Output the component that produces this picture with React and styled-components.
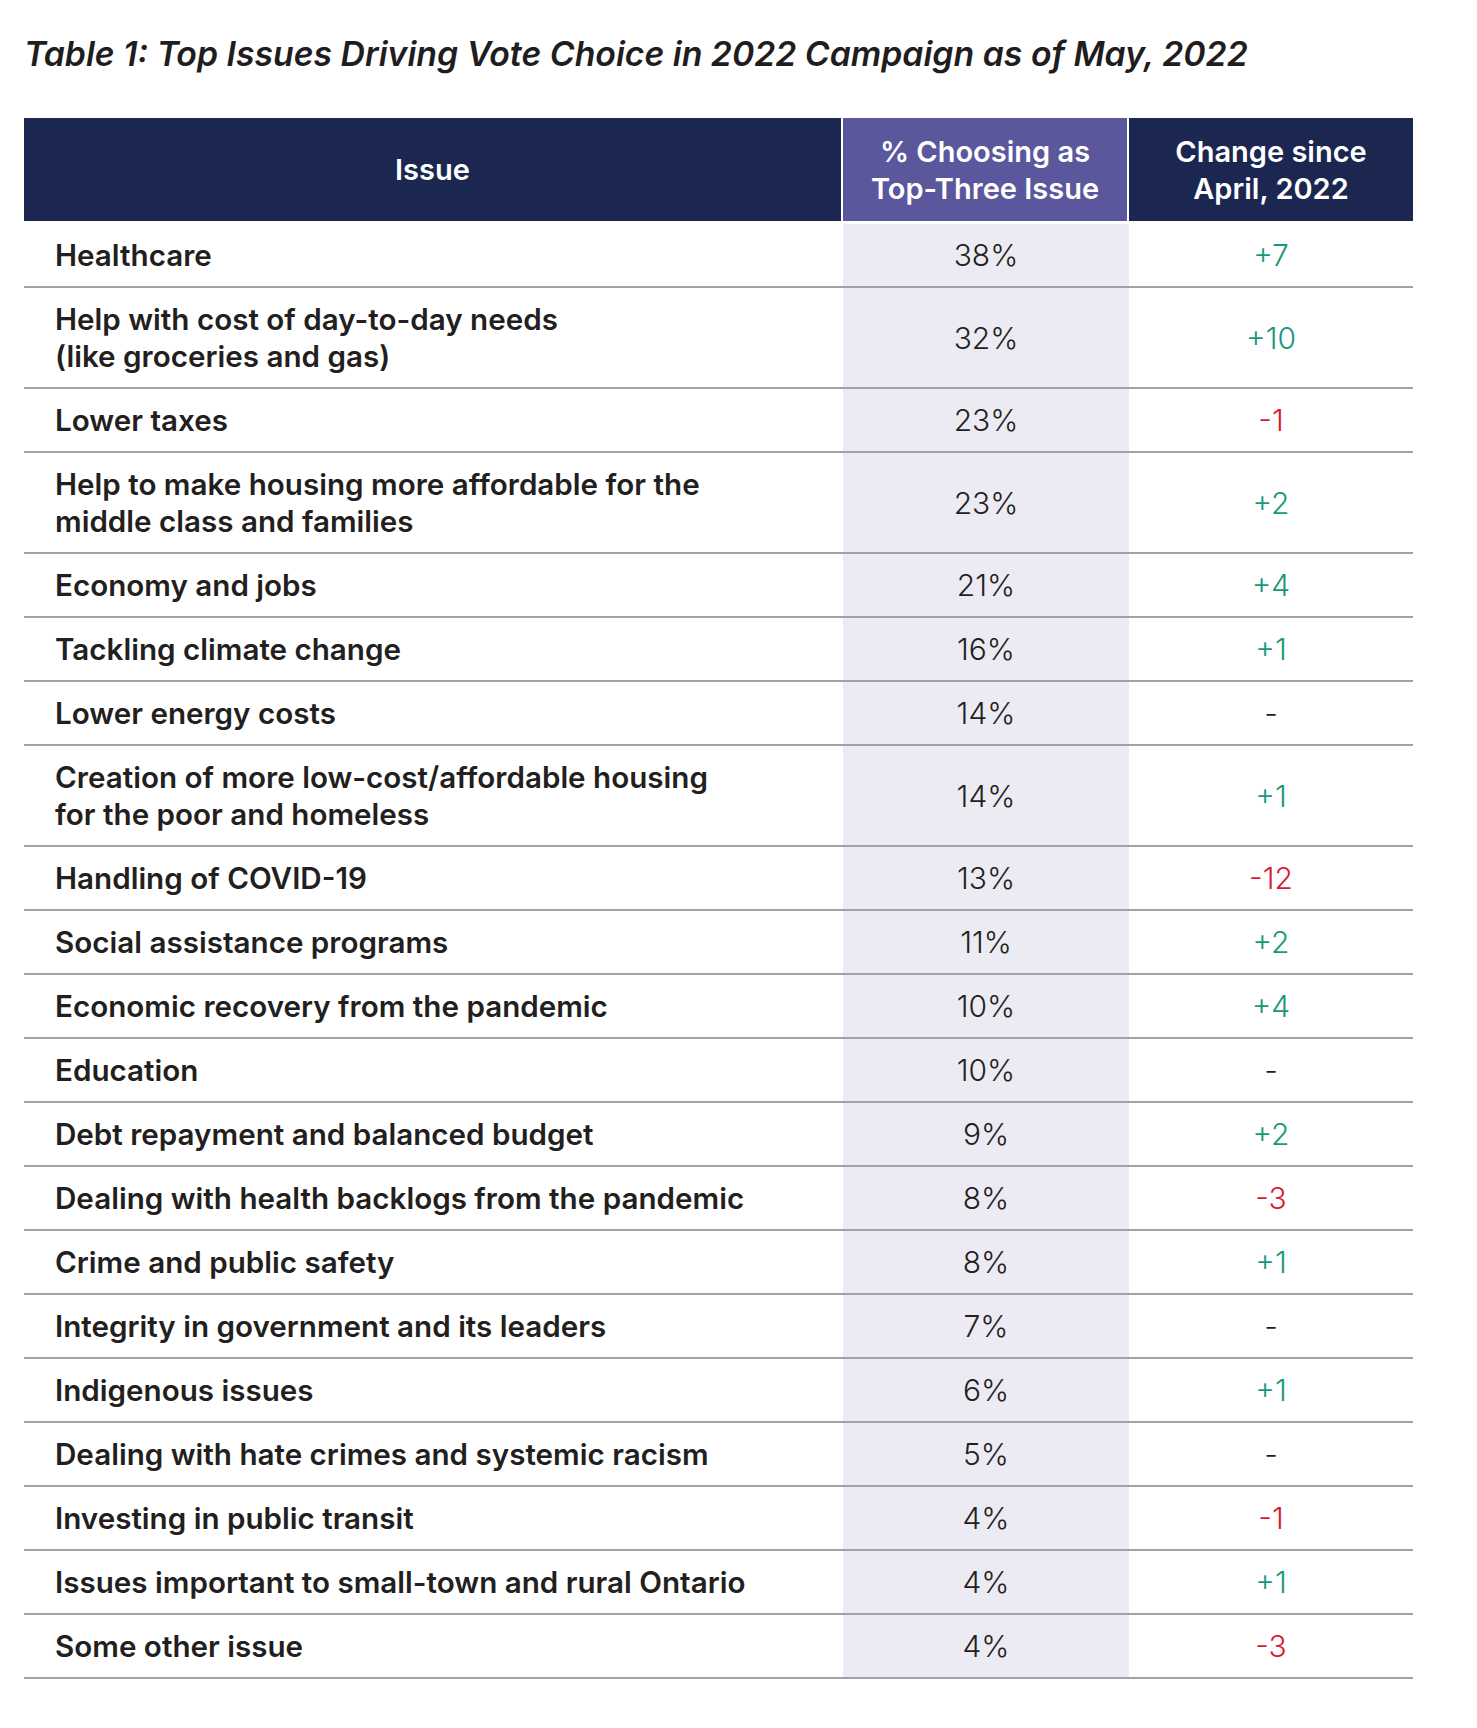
import React from 'react';
import styled, { createGlobalStyle } from 'styled-components';

const GlobalStyle = createGlobalStyle`
  html, body {
    margin: 0;
    padding: 0;
    background: #fff;
  }
  body {
    font-family: "Inter", "Noto Sans", "Liberation Sans", sans-serif;
    color: #231f20;
  }
`;

const Page = styled.div`
  width: 1477px;
  padding: 34px 0 50px 24px;
  box-sizing: border-box;
`;

const Title = styled.h1`
  margin: 0 0 44px;
  font-size: 33.8px;
  line-height: 40px;
  font-weight: 600;
  font-style: italic;
  color: #1f1d1e;
`;

const Table = styled.div`
  width: 1389px;
`;

const HeaderRow = styled.div`
  display: grid;
  grid-template-columns: 817px 284px 284px;
  column-gap: 2px;
  height: 103px;
  margin-bottom: 3px;
`;

const HeadCell = styled.div`
  display: flex;
  align-items: center;
  justify-content: center;
  text-align: center;
  background: ${p => (p.$accent ? '#5b579d' : '#1b2751')};
  color: #fff;
  font-size: 29px;
  line-height: 37px;
  font-weight: 600;
`;

const Row = styled.div`
  display: grid;
  grid-template-columns: 819px 286px 284px;
  border-bottom: 2px solid #a2a2a4;
`;

const Cell = styled.div`
  display: flex;
  align-items: center;
  padding: 13px 0 12px;
  font-size: 30px;
  line-height: 37px;
`;

const IssueCell = styled(Cell)`
  padding-left: 31px;
  font-size: 29.6px;
  font-weight: 600;
  color: #231f20;
`;

const ShareCell = styled(Cell)`
  justify-content: center;
  background: #ecebf4;
  font-weight: 300;
  color: #231f20;
`;

const ChangeCell = styled(Cell)`
  justify-content: center;
  font-weight: 300;
  color: ${p => (p.$dir === 'up' ? '#17987a' : p.$dir === 'down' ? '#d71a34' : '#231f20')};
`;

const rows = [
  [['Healthcare'], '38%', '+7'],
  [['Help with cost of day-to-day needs', '(like groceries and gas)'], '32%', '+10'],
  [['Lower taxes'], '23%', '-1'],
  [['Help to make housing more affordable for the', 'middle class and families'], '23%', '+2'],
  [['Economy and jobs'], '21%', '+4'],
  [['Tackling climate change'], '16%', '+1'],
  [['Lower energy costs'], '14%', '-'],
  [['Creation of more low-cost/affordable housing', 'for the poor and homeless'], '14%', '+1'],
  [['Handling of COVID-19'], '13%', '-12'],
  [['Social assistance programs'], '11%', '+2'],
  [['Economic recovery from the pandemic'], '10%', '+4'],
  [['Education'], '10%', '-'],
  [['Debt repayment and balanced budget'], '9%', '+2'],
  [['Dealing with health backlogs from the pandemic'], '8%', '-3'],
  [['Crime and public safety'], '8%', '+1'],
  [['Integrity in government and its leaders'], '7%', '-'],
  [['Indigenous issues'], '6%', '+1'],
  [['Dealing with hate crimes and systemic racism'], '5%', '-'],
  [['Investing in public transit'], '4%', '-1'],
  [['Issues important to small-town and rural Ontario'], '4%', '+1'],
  [['Some other issue'], '4%', '-3'],
];

function direction(change) {
  if (change.startsWith('+')) return 'up';
  if (change.length > 1) return 'down';
  return 'flat';
}

export default function App() {
  return (
    <Page>
      <GlobalStyle />
      <Title>Table 1: Top Issues Driving Vote Choice in 2022 Campaign as of May, 2022</Title>
      <Table>
        <HeaderRow>
          <HeadCell>Issue</HeadCell>
          <HeadCell $accent>
            % Choosing as
            <br />
            Top-Three Issue
          </HeadCell>
          <HeadCell>
            Change since
            <br />
            April, 2022
          </HeadCell>
        </HeaderRow>
        {rows.map(([issue, share, change]) => (
          <Row key={issue[0]}>
            <IssueCell>
              <div>
                {issue.map((line, i) => (
                  <div key={i}>{line}</div>
                ))}
              </div>
            </IssueCell>
            <ShareCell>{share}</ShareCell>
            <ChangeCell $dir={direction(change)}>{change}</ChangeCell>
          </Row>
        ))}
      </Table>
    </Page>
  );
}
